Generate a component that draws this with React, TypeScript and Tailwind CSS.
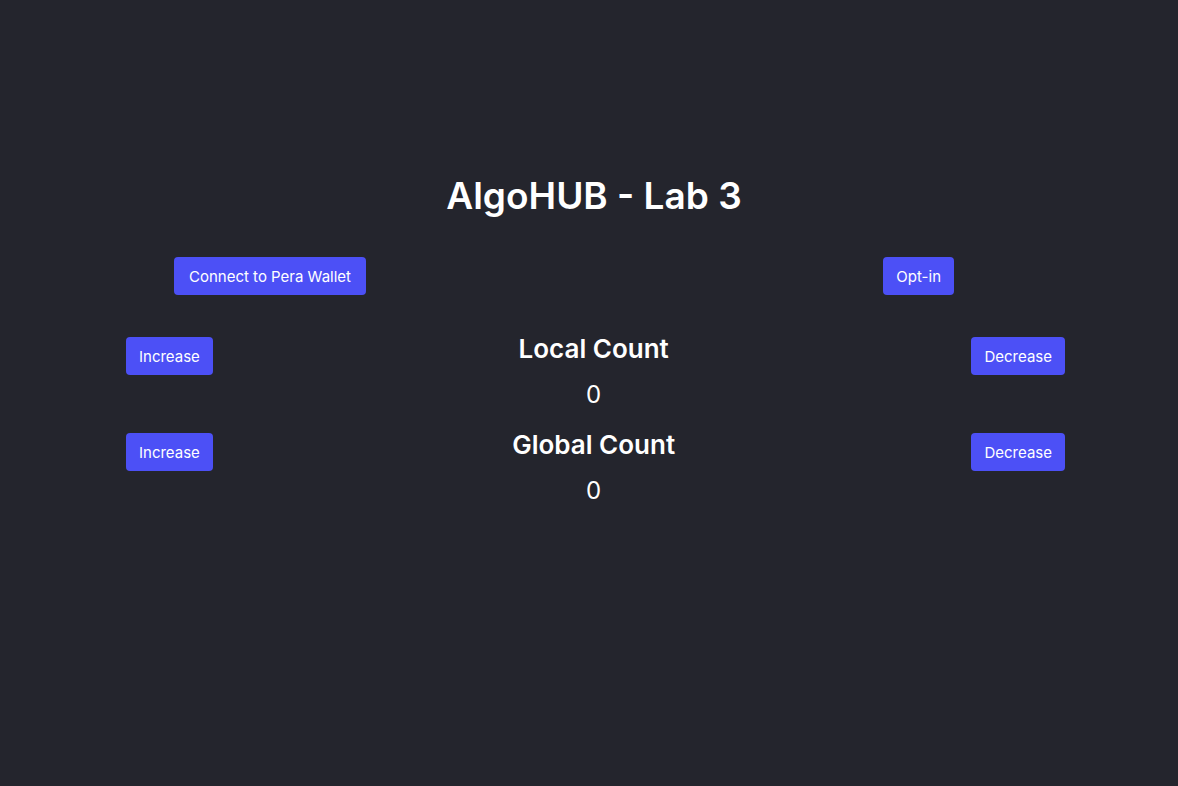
import { ReactNode } from 'react';

function Btn({ children, className = '' }: { children: ReactNode; className?: string }) {
  return (
    <button
      className={`rounded bg-[#4c50f6] pt-[9px] pb-[7px] text-[15px] leading-[22px] text-white ${className}`}
    >
      {children}
    </button>
  );
}

function CounterRow({ label, value, className = '' }: { label: string; value: number; className?: string }) {
  return (
    <div className={`flex items-start pl-[126px] pr-[113px] ${className}`}>
      <Btn className="mt-1 px-[13px]">Increase</Btn>
      <div className="flex-1 pl-[3px] text-center">
        <h2 className="text-[26px] font-semibold leading-8">{label}</h2>
        <p className="mt-[14px] text-2xl leading-8">{value}</p>
      </div>
      <Btn className="mt-1 px-[13px]">Decrease</Btn>
    </div>
  );
}

export default function App() {
  return (
    <div className="min-h-[786px] bg-[#24252d] pt-[176px] text-white [font-family:Inter,'Noto_Sans',sans-serif]">
      <h1 className="pl-[10px] text-center text-[37px] font-semibold leading-10">AlgoHUB - Lab 3</h1>

      <div className="mt-[41px] flex items-start justify-between pl-[174px] pr-[224px]">
        <Btn className="px-[15px]">Connect to Pera Wallet</Btn>
        <Btn className="px-[13px]">Opt-in</Btn>
      </div>

      <CounterRow label="Local Count" value={0} className="mt-[38px]" />
      <CounterRow label="Global Count" value={0} className="mt-[18px]" />
    </div>
  );
}
